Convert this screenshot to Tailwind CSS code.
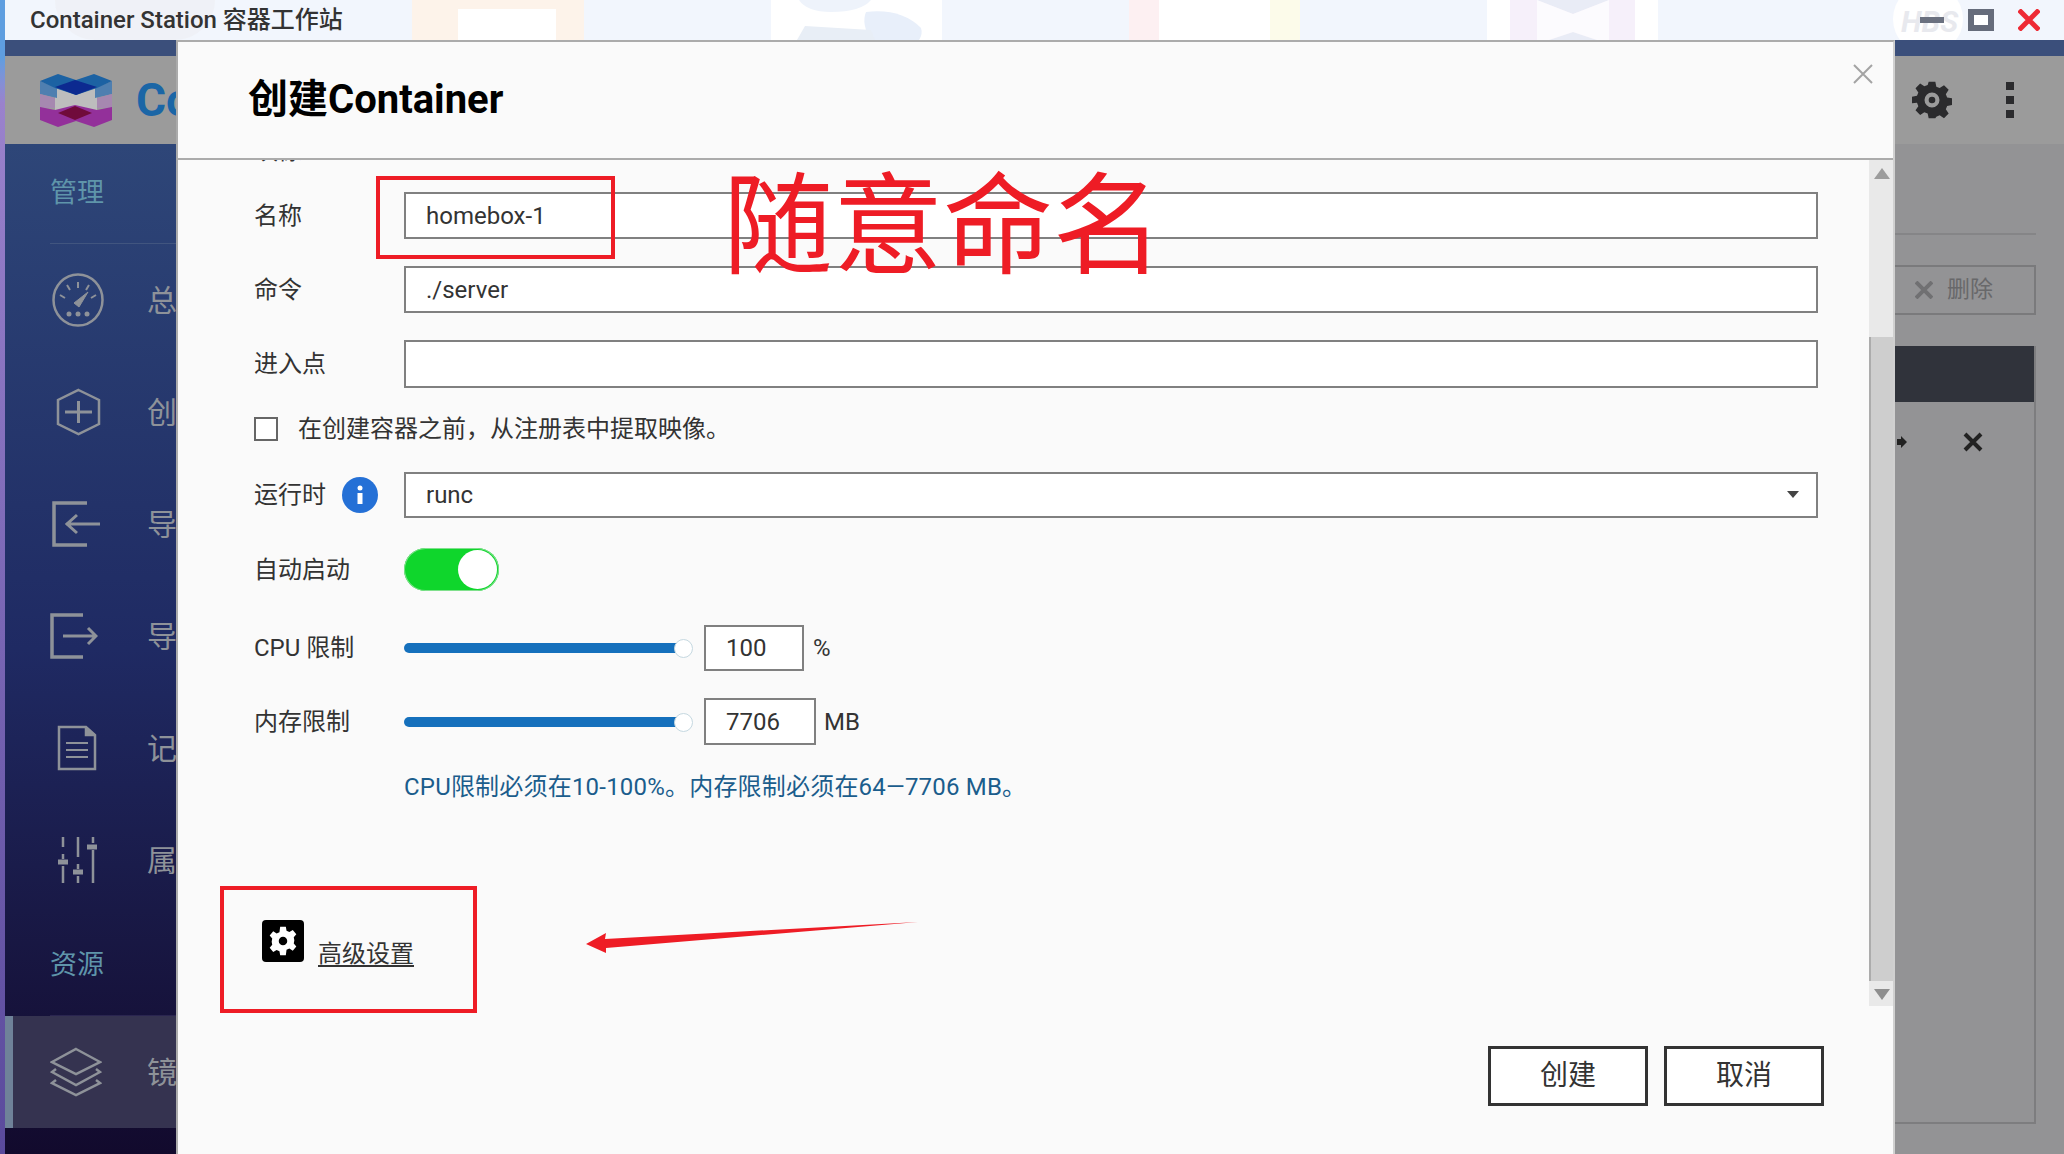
<!DOCTYPE html>
<html lang="zh-CN">
  <head>
    <meta charset="UTF-8" />
    <meta name="viewport" content="width=device-width, initial-scale=1.0" />
    <title>Container Station</title>
    <script src="https://cdn.jsdelivr.net/npm/@tailwindcss/browser@4"></script>
  </head>

  <body class="w-[2064px] h-[1154px] overflow-hidden bg-[#939395] font-['Roboto','Noto_Sans_CJK_SC',sans-serif] text-[#333] text-[24px]">
    <div class="relative flex w-full h-full">
      <!-- Desktop strip on the left -->
      <div class="w-[5px] h-full shrink-0 bg-gradient-to-b from-[#5f9ee0] from-5% via-[#9a82cc] via-9% to-[#5a4a9c]"></div>

      <div class="flex flex-col flex-1 min-w-0">
        <!-- Title bar -->
        <header class="relative h-10 shrink-0 flex items-center justify-between overflow-hidden bg-[#f2f6fd]">
          <!-- Desktop icons showing through -->
          <div class="absolute left-[50px] top-0 w-[160px] h-10 bg-[#eef0f3]/70 rounded-b-full"></div>
          <div class="absolute left-[407px] top-0 w-[172px] h-10 bg-[#fdf3ea]">
            <div class="ml-[46px] mt-[9px] w-[98px] h-[31px] bg-white"></div>
          </div>
          <svg class="absolute left-[766px] top-0" width="171" height="40" viewBox="0 0 171 40">
            <rect width="171" height="40" fill="#fff" />
            <path d="M28 0H100Q90 12 60 12 36 12 28 0Z" fill="#eef3fb" />
            <path d="M95 12Q130 8 150 28 152 34 148 40H100Q90 24 95 12Z" fill="#e8effa" />
            <path d="M26 40 34 26 100 30 104 40Z" fill="#e8eef6" />
          </svg>
          <div class="absolute left-[1124px] top-0 w-[171px] h-10 flex">
            <div class="w-[30px] bg-[#fdf0f2]"></div>
            <div class="flex-1 bg-white"></div>
            <div class="w-[30px] bg-[#fcfbea]"></div>
          </div>
          <svg class="absolute left-[1482px] top-0" width="171" height="40" viewBox="0 0 171 40">
            <rect width="171" height="40" fill="#fff" />
            <path d="M23 0H148V40H23Z" fill="#f6f0fa" />
            <path d="M50 0H122L86 14ZM62 40 86 32 110 40Z" fill="#e9ecf6" />
            <path d="M50 0 86 14 122 0V40H110L86 32 62 40H50Z" fill="#fff" opacity="0.7" />
          </svg>
          <div class="absolute left-[1888px] top-[-16px] w-[70px] h-[70px] rounded-full bg-white"></div>
          <span class="absolute left-[1896px] top-[6px] font-bold italic text-[30px] leading-[32px] text-[#e8e9ee]">HBS</span>

          <span class="relative ml-[25px] -mt-[1px] font-medium leading-none">Container Station 容器工作站</span>

          <div class="relative flex items-center">
            <div class="w-6 h-[6px] bg-[#6b7180]"></div>
            <div class="ml-6 w-[26px] h-[22px] border-[6px] border-[#666c7b] bg-white"></div>
            <svg class="ml-6 mr-[24px]" width="22" height="22" viewBox="0 0 22 22" fill="none" stroke="#ee2a35" stroke-width="5"><path d="M1 1 21 21M21 1 1 21" /></svg>
          </div>
        </header>

        <!-- Blue strip of the app window -->
        <div class="h-4 shrink-0 bg-[#3b4f7b]"></div>

        <!-- App header behind the dialog -->
        <div class="relative h-[88px] shrink-0 flex items-center bg-[#9b9b9b]">
          <svg class="ml-[35px] shrink-0" width="72" height="53" viewBox="0 0 72 53">
            <path d="M15 14 36 20 57 14V38L36 32 15 38Z" fill="#bdbdbd" />
            <path d="M0 7 17 14V24L0 20ZM72 7 55 14V24L72 20Z" fill="#4f7fb0" />
            <path d="M0 20 15 24V34H0ZM72 20 57 24V34H72Z" fill="#a688b0" />
            <path d="M0 7 18 0 36 6 54 0 72 7 57 14 36 21 15 14Z" fill="#1c62a3" />
            <path d="M15 13 35 6 57 13 36 21Z" fill="#0c2a90" />
            <path d="M0 33 15 36 35 31 57 36 72 33V46L54 53 36 47 18 53 0 46Z" fill="#93309a" />
            <path d="M18 39 35 32 52 39 35 46Z" fill="#700b3b" />
          </svg>
          <span class="ml-[24px] font-bold text-[46px] leading-none text-[#1b66a6]">Co</span>
          <svg class="absolute left-[1907px]" width="40" height="40" viewBox="0 0 24 24" fill="#2b2b2d"><path fill-rule="evenodd" d="M10 1h4l.6 3 2 .8 2.600-1.700 2.800 2.800-1.700 2.600.8 2 2.900.5v4l-2.900.6-.8 2 1.700 2.500-2.800 2.800-2.600-1.700-2 .8L14 23h-4l-.6-2.900-2-.8-2.500 1.700-2.800-2.800 1.700-2.500-.8-2L0 14v-4l3-.5.8-2-1.700-2.600 2.800-2.800 2.500 1.700 2-.8ZM12 7.500a4.500 4.500 0 1 0 0 9 4.500 4.500 0 0 0 0-9Zm0 2.500a2 2 0 1 1 0 4 2 2 0 0 1 0-4Z" /></svg>
          <div class="absolute left-[2001px] flex flex-col gap-[6px]">
            <div class="w-2 h-2 bg-[#2b2b2d]"></div>
            <div class="w-2 h-2 bg-[#2b2b2d]"></div>
            <div class="w-2 h-2 bg-[#2b2b2d]"></div>
          </div>
        </div>

        <div class="flex flex-1 min-h-0">
          <!-- Sidebar -->
          <aside class="w-[171px] shrink-0 flex flex-col overflow-hidden bg-gradient-to-b from-[#2e4678] via-[#1f2a63] via-50% to-[#120a2d] text-[#8e9299]">
            <div class="h-[100px] shrink-0 pl-[45px]">
              <div class="h-full pt-[31px] border-b border-[#41557f] text-[27px] leading-[36px] text-[#5f95aa]">管理</div>
            </div>

            <div class="h-[112px] shrink-0 flex items-center">
              <svg class="ml-[47px] shrink-0" width="52" height="54" viewBox="0 0 52 54" fill="none" stroke="#8e9299" stroke-width="2.500">
                <ellipse cx="26" cy="27" rx="24.500" ry="25.500" />
                <path d="M8 22l5 3M15 12l3 5M26 9v6M37 12l-3 5M44 22l-5 3" stroke-width="2" />
                <path d="M22 30 36 19 27 34Z" fill="#8e9299" stroke-width="1" />
                <circle cx="17" cy="41" r="2.500" fill="#8e9299" stroke="none" />
                <circle cx="26" cy="41" r="2.500" fill="#8e9299" stroke="none" />
                <circle cx="35" cy="41" r="2.500" fill="#8e9299" stroke="none" />
              </svg>
              <span class="ml-[43px] text-[30px] whitespace-nowrap">总览</span>
            </div>
            <div class="h-[112px] shrink-0 flex items-center">
              <svg class="ml-[51px] shrink-0" width="45" height="48" viewBox="0 0 45 48" fill="none" stroke="#8e9299" stroke-width="2.500">
                <path d="M22.500 2 43 12V36L22.500 46 2 36V12Z" />
                <path d="M22.500 13V35M9 24H36" stroke-width="3" />
              </svg>
              <span class="ml-[46px] text-[30px] whitespace-nowrap">创建</span>
            </div>
            <div class="h-[112px] shrink-0 flex items-center">
              <svg class="ml-[47px] shrink-0" width="48" height="46" viewBox="0 0 48 46" fill="none" stroke="#8e9299" stroke-width="3.500">
                <path d="M35 2H2V44H35" />
                <path d="M48 23H14M25 14 15 23 25 32" stroke-width="3" />
              </svg>
              <span class="ml-[47px] text-[30px] whitespace-nowrap">导入</span>
            </div>
            <div class="h-[112px] shrink-0 flex items-center">
              <svg class="ml-[45px] shrink-0" width="48" height="46" viewBox="0 0 48 46" fill="none" stroke="#8e9299" stroke-width="3.500">
                <path d="M33 2H2V44H33" />
                <path d="M13 23H46M38 15 46 23 38 31" stroke-width="3" />
              </svg>
              <span class="ml-[49px] text-[30px] whitespace-nowrap">导出</span>
            </div>
            <div class="h-[112px] shrink-0 flex items-center">
              <svg class="ml-[52px] shrink-0" width="40" height="46" viewBox="0 0 40 46" fill="none" stroke="#8e9299" stroke-width="2.500">
                <path d="M2 2H29L38 10V44H2Z" />
                <path d="M29 2V10H38" fill="#8e9299" />
                <path d="M9 18H31M9 25H31M9 32H31" stroke-width="2" />
              </svg>
              <span class="ml-[50px] text-[30px] whitespace-nowrap">记录</span>
            </div>
            <div class="h-[112px] shrink-0 flex items-center">
              <svg class="ml-[53px] shrink-0" width="39" height="46" viewBox="0 0 39 46" fill="none" stroke="#8e9299" stroke-width="2.500">
                <path d="M5 0V10M5 17V22M5 29V46M20 0V20M20 27V32M20 39V46M35 0V6M35 13V46" />
                <path d="M0 25H10M15 35H25M29 10H39" stroke-width="5" />
              </svg>
              <span class="ml-[50px] text-[30px] whitespace-nowrap">属性</span>
            </div>
            <div class="h-[100px] shrink-0 pl-[45px]">
              <div class="h-full pt-[31px] border-b border-[#2a2550] text-[27px] leading-[36px] text-[#5f95aa]">资源</div>
            </div>
            <div class="h-[112px] shrink-0 flex items-center border-l-[8px] border-[#6f8299] bg-[#353350]">
              <svg class="ml-[37px] shrink-0" width="52" height="50" viewBox="0 0 52 50" fill="none" stroke="#8e9299" stroke-width="2.500">
                <path d="M26 2 50 15 26 27 2 15Z" />
                <path d="M6 22 2 25 26 38 50 25 46 22M6 33 2 36 26 48 50 36 46 33" />
              </svg>
              <span class="ml-[45px] text-[30px] whitespace-nowrap">镜像</span>
            </div>
          </aside>

          <!-- Content behind the dialog (only its right edge shows) -->
          <div class="flex-1 relative">
            <div class="absolute left-[1700px] top-[89px] w-[160px] border-t-2 border-[#858587]"></div>
            <div class="absolute left-[1700px] top-[121px] w-[160px] h-[50px] flex items-center justify-end pr-[41px] border-2 border-[#7a7a7c] text-[23px] text-[#68686a]">
              <svg class="mr-[14px]" width="18" height="18" viewBox="0 0 18 18" fill="none" stroke="#707072" stroke-width="4"><path d="M1 1 17 17M17 1 1 17" /></svg>
              删除
            </div>
            <div class="absolute left-[1700px] top-[202px] w-[160px] h-[778px] border-r-2 border-b-2 border-[#7d7d7f]">
              <div class="h-[56px] bg-[#30333b]"></div>
              <svg class="absolute left-[21px] top-[90px]" width="10" height="12" viewBox="0 0 10 12" fill="#222"><path d="M0 3H4V0L10 6 4 12V9H0Z" /></svg>
              <svg class="absolute left-[87px] top-[86px]" width="20" height="20" viewBox="0 0 20 20" fill="none" stroke="#222" stroke-width="4"><path d="M2 2 18 18M18 2 2 18" /></svg>
            </div>
          </div>
        </div>
      </div>

      <!-- Create container dialog -->
      <section class="absolute left-[176px] top-10 w-[1719px] h-[1114px] flex flex-col border-t-2 border-l-2 border-r-2 border-[#ababab] border-r-[#d0d0d0] bg-[#fafafa]">
        <div class="relative h-[118px] shrink-0 flex items-center pl-[70px] border-b-2 border-[#ababab]">
          <h2 class="font-bold text-[40px] leading-none text-black">创建Container</h2>
          <svg class="absolute right-[20px] top-[22px]" width="20" height="20" viewBox="0 0 20 20" fill="none" stroke="#a3a3a3" stroke-width="2"><path d="M1 1 19 19M19 1 1 19" /></svg>
        </div>

        <div class="h-[846px] shrink-0 flex">
          <form class="flex-1 min-w-0 pl-[76px] pr-[51px]">
            <!-- Previous row, scrolled away -->
            <div class="h-[4px] overflow-hidden">
              <div class="-mt-[22px] leading-[26px]">映像</div>
            </div>

            <div class="mt-[28px] flex items-center">
              <label class="w-[150px]">名称</label>
              <div class="flex-1 h-[47px] pl-[20px] flex items-center border-2 border-[#808080] bg-white">homebox-1</div>
            </div>
            <div class="mt-[27px] flex items-center">
              <label class="w-[150px]">命令</label>
              <div class="flex-1 h-[47px] pl-[20px] flex items-center border-2 border-[#808080] bg-white">./server</div>
            </div>
            <div class="mt-[27px] flex items-center">
              <label class="w-[150px]">进入点</label>
              <div class="flex-1 h-[48px] border-2 border-[#808080] bg-white"></div>
            </div>

            <div class="mt-[29px] h-[24px] flex items-center">
              <div class="w-[24px] h-[24px] border-2 border-[#666] bg-white"></div>
              <span class="ml-[20px]">在创建容器之前，从注册表中提取映像。</span>
            </div>

            <div class="mt-[31px] flex items-center">
              <div class="w-[150px] flex items-center">
                <label>运行时</label>
                <div class="ml-[16px] w-[36px] h-[36px] rounded-full flex items-center justify-center bg-[#2470d6]">
                  <svg width="8" height="20" viewBox="0 0 8 20" fill="white"><circle cx="4" cy="3" r="2.500" /><path d="M1.500 8H6.500V19H1.500Z" /></svg>
                </div>
              </div>
              <div class="relative flex-1 h-[46px] pl-[20px] flex items-center border-2 border-[#808080] bg-white">
                runc
                <svg class="absolute right-[17px] top-[17px]" width="12" height="7" viewBox="0 0 12 7" fill="#444"><path d="M0 0H12L6 7Z" /></svg>
              </div>
            </div>

            <div class="mt-[30px] flex items-center">
              <label class="w-[150px]">自动启动</label>
              <div class="w-[95px] h-[43px] p-[2px] flex justify-end rounded-full bg-[#0fd62c] shadow-[inset_0_0_0_1px_#7fe08c]">
                <div class="w-[39px] h-[39px] rounded-full bg-white"></div>
              </div>
            </div>

            <div class="mt-[34px] flex items-center">
              <label class="w-[150px]">CPU 限制</label>
              <div class="relative w-[288px] h-[10px] mr-[12px] flex-none">
                <div class="w-[278px] h-[10px] rounded-full bg-[#1570bc]"></div>
                <div class="absolute left-[270px] top-[-4px] w-[19px] h-[19px] rounded-full bg-white border border-[#c5d8e0]"></div>
              </div>
              <div class="w-[100px] h-[46px] pl-[20px] flex items-center border-2 border-[#808080] bg-white">100</div>
              <span class="ml-[9px]">%</span>
            </div>

            <div class="mt-[27px] flex items-center">
              <label class="w-[150px]">内存限制</label>
              <div class="relative w-[288px] h-[10px] mr-[12px] flex-none">
                <div class="w-[278px] h-[10px] rounded-full bg-[#1570bc]"></div>
                <div class="absolute left-[270px] top-[-4px] w-[19px] h-[19px] rounded-full bg-white border border-[#c5d8e0]"></div>
              </div>
              <div class="w-[112px] h-[47px] pl-[20px] flex items-center border-2 border-[#808080] bg-white">7706</div>
              <span class="ml-[8px]">MB</span>
            </div>

            <p class="mt-[25px] ml-[150px] leading-[34px] tracking-[0.2px] text-[#1b5d8c]">CPU限制必须在10-100%。内存限制必须在64—7706 MB。</p>

            <div class="mt-[116px] ml-[8px] flex items-end">
              <div class="w-[42px] h-[42px] rounded-[4px] flex items-center justify-center bg-black">
                <svg width="34" height="34" viewBox="0 0 24 24" fill="white"><path fill-rule="evenodd" d="M10 2h4l.5 2.800 2 .9 2.400-1.500 2.500 3-1.800 2.100.4 2.200-.4 2.200 1.800 2.100-2.500 3-2.400-1.500-2 .9L14 22h-4l-.5-2.800-2-.9-2.400 1.500-2.500-3 1.800-2.100-.4-2.200.4-2.200-1.800-2.100 2.500-3 2.400 1.500 2-.9ZM12 9a3 3 0 1 0 0 6 3 3 0 0 0 0-6Z" /></svg>
              </div>
              <a class="ml-[14px] -mb-[8px] underline underline-offset-[3px] leading-[32px]">高级设置</a>
            </div>
          </form>

          <!-- Scrollbar -->
          <div class="relative w-[24px] shrink-0 bg-[#e9e9e9]">
            <svg class="absolute left-[5px] top-[8px]" width="16" height="11" viewBox="0 0 16 11" fill="#9c9c9c"><path d="M8 0 16 11H0Z" /></svg>
            <div class="absolute left-0 top-[177px] w-[24px] h-[644px] border-l-2 border-[#acacac] bg-[#cecece]"></div>
            <svg class="absolute left-[5px] bottom-[6px]" width="16" height="11" viewBox="0 0 16 11" fill="#8e8e8e"><path d="M0 0H16L8 11Z" /></svg>
          </div>
        </div>

        <footer class="flex-1 flex justify-end gap-[16px] pt-[40px] pr-[69px]">
          <button class="w-[160px] h-[60px] border-[3px] border-[#333] bg-white text-[28px]">创建</button>
          <button class="w-[160px] h-[60px] border-[3px] border-[#333] bg-white text-[28px]">取消</button>
        </footer>
      </section>

      <!-- Red annotations drawn over the screenshot -->
      <div class="absolute left-[376px] top-[176px] w-[239px] h-[83px] border-[4px] border-[#ee1c25]"></div>
      <div class="absolute left-[723px] top-[164px] text-[110px] leading-[128px] whitespace-nowrap text-[#ee1c25]">随意命名</div>
      <div class="absolute left-[220px] top-[886px] w-[257px] h-[127px] border-[4px] border-[#ee1c25]"></div>
      <svg class="absolute left-[586px] top-[922px]" width="332" height="32" viewBox="0 0 332 32" fill="#ee1c25"><path d="M0 22 20 11 19 17 332 0 20 26 20 31Z" /></svg>
    </div>
  </body>
</html>
